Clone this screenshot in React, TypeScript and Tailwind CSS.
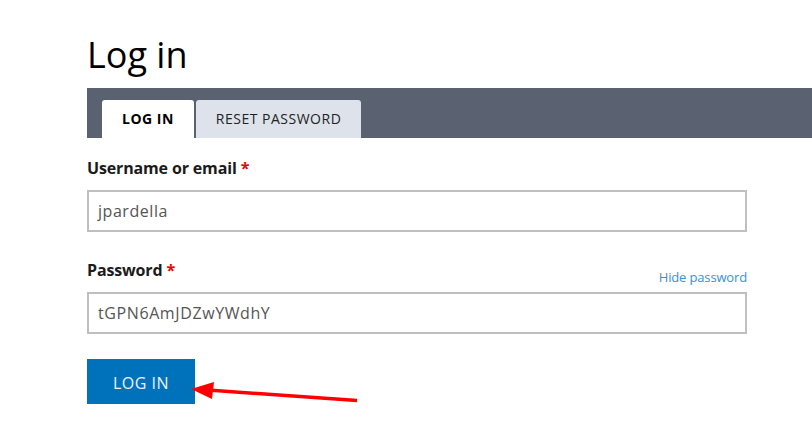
export default function App() {
  return (
    <div className="relative min-h-[446px] bg-white pl-[87px] pt-[33px] font-['Open_Sans',sans-serif] text-[#222]">
      <h1 className="h-[44px] text-[36px] font-normal leading-[44px] text-black">Log in</h1>

      <div className="mt-[11px] flex h-[50px] items-end gap-[2px] bg-[#5a6271] pl-[15px]">
        <div className="h-[38px] rounded-t-[3px] bg-white px-[20px] text-[14px] font-bold leading-[38px] tracking-[0.5px] text-black">
          LOG IN
        </div>
        <div className="h-[38px] rounded-t-[3px] bg-[#dee2ea] px-[20px] text-[14px] leading-[38px] tracking-[0.5px] text-[#222]">
          RESET PASSWORD
        </div>
      </div>

      <form className="w-[660px]">
        <label className="mt-[18px] block text-[16px] font-bold leading-[24px] tracking-[-0.15px] text-[#1b1b1b]">
          Username or email <span className="text-[#e00]">*</span>
        </label>
        <div className="mt-[10px] h-[42px] border-2 border-[#bfbfbf] pl-[9px] text-[16px] leading-[38px] tracking-[0.55px] text-[#555]">
          jpardella
        </div>

        <div className="mt-[26px] flex h-[24px] items-end justify-between">
          <label className="text-[16px] font-bold leading-[24px] tracking-[-0.15px] text-[#1b1b1b]">
            Password <span className="text-[#e00]">*</span>
          </label>
          <a className="mb-[-3px] text-[13px] leading-[16px] tracking-[-0.15px] text-[#3991d6]">Hide password</a>
        </div>
        <div className="mt-[10px] h-[42px] border-2 border-[#bfbfbf] pl-[9px] text-[16px] leading-[38px] tracking-[0.6px] text-[#555]">
          tGPN6AmJDZwYWdhY
        </div>

        <button
          type="button"
          className="mt-[25px] h-[45px] w-[108px] bg-[#0072bc] pt-[3px] text-[16px] leading-[42px] tracking-[0.5px] text-[#eef4fa]"
        >
          LOG IN
        </button>
      </form>

      <svg
        className="pointer-events-none absolute left-0 top-0"
        width="812"
        height="446"
        viewBox="0 0 812 446"
      >
        <line x1="357" y1="400.5" x2="208" y2="390" stroke="#f00" strokeWidth="3.5" />
        <polygon points="191,389 214,382 212,399" fill="#f00" />
      </svg>
    </div>
  );
}
